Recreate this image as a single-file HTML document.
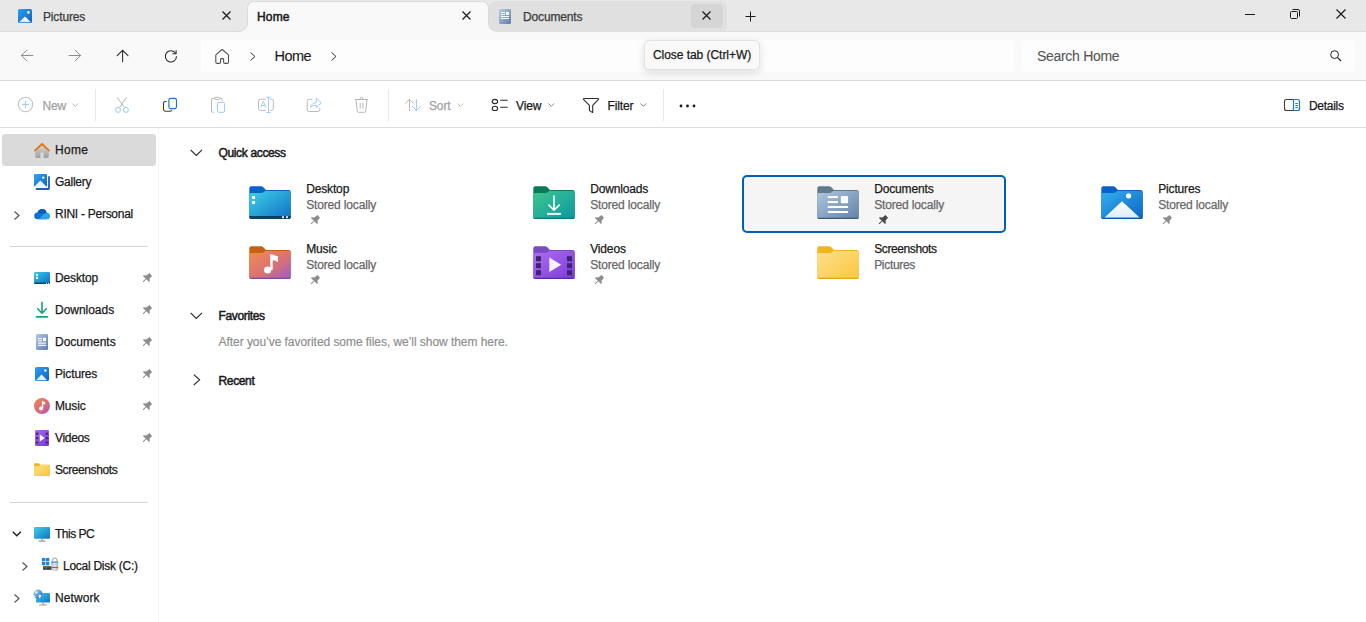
<!DOCTYPE html>
<html><head><meta charset="utf-8">
<style>
*{box-sizing:border-box;margin:0;padding:0}
html,body{width:1366px;height:622px;overflow:hidden;background:#fff}
body{position:relative;font-family:"Liberation Sans",sans-serif;font-size:12px;color:#1a1a1a}
.a{position:absolute}
.t{position:absolute;white-space:nowrap;-webkit-text-stroke:0.25px currentColor}
svg{position:absolute;overflow:visible}
</style></head><body>
<div class="a" style="left:0px;top:0px;width:1366px;height:31px;background:#e8e8e8;border-radius:0px;"></div>
<div class="a" style="left:0px;top:31px;width:1366px;height:1px;background:#dcdcdc;border-radius:0px;"></div>
<div class="a" style="left:0px;top:32px;width:1366px;height:48px;background:#f9f9f9;border-radius:0px;"></div>
<div class="a" style="left:0px;top:80px;width:1366px;height:1px;background:#dadada;border-radius:0px;"></div>
<div class="a" style="left:0px;top:81px;width:1366px;height:46px;background:#ffffff;border-radius:0px;"></div>
<div class="a" style="left:0px;top:127px;width:1366px;height:1px;background:#dcdcdc;border-radius:0px;"></div>
<div class="a" style="left:489px;top:1px;width:238px;height:30.5px;background:#e0e0e0;border-radius:7px;"></div>
<div class="a" style="left:691px;top:4px;width:32px;height:24px;background:#d5d5d5;border-radius:4px;"></div>
<svg style="left:236px;top:0px" width="264" height="33" viewBox="236 0 264 33"><path d="M236 31.5 Q247.5 31.5 247.5 23 V8.5 Q247.5 1.5 254.5 1.5 H481.5 Q488.5 1.5 488.5 8.5 V23 Q488.5 31.5 500 31.5 V33 H236 Z" fill="#f9f9f9"/><path d="M236 31.5 Q247.5 31.5 247.5 23 V8.5 Q247.5 1.5 254.5 1.5 H481.5 Q488.5 1.5 488.5 8.5 V23 Q488.5 31.5 500 31.5" fill="none" stroke="#dadada" stroke-width="1"/></svg>
<div class="a" style="left:201px;top:40px;width:813px;height:32px;background:#fdfdfd;border-radius:4px;"></div>
<div class="a" style="left:1022px;top:40px;width:333px;height:32px;background:#fdfdfd;border-radius:4px;"></div>
<div class="a" style="left:158px;top:128px;width:1px;height:494px;background:#f5f5f5;border-radius:0px;"></div>
<svg style="left:18px;top:9px" width="14" height="14" viewBox="0 0 14 14"><defs><linearGradient id="pg" x1="0" y1="0" x2="1" y2="1"><stop offset="0" stop-color="#2aa0f2"/><stop offset="1" stop-color="#0c62c0"/></linearGradient>
<linearGradient id="pm" x1="0" y1="0" x2="0" y2="1"><stop offset="0" stop-color="#ffffff"/><stop offset="1" stop-color="#d6e9fb"/></linearGradient></defs>
<rect x="0" y="0" width="14" height="14" rx="1.5" fill="url(#pg)"/>
<path d="M1 13.2 L7 7.6 L13 13.2 Z" fill="url(#pm)"/>
<circle cx="10.4" cy="3.4" r="1.3" fill="#fff"/></svg>
<div class="t" style="left:43px;top:9.00px;font-size:12px;line-height:16px;color:#3a3a3a;letter-spacing:-0.15px;">Pictures</div>
<svg style="left:222px;top:11px" width="9" height="9" viewBox="0 0 9 9"><path d="M0.5 0.5 L8.5 8.5 M8.5 0.5 L0.5 8.5" stroke="#1a1a1a" stroke-width="1.15" fill="none"/></svg>
<div class="t" style="left:257px;top:9.00px;font-size:12px;line-height:16px;color:#1a1a1a;letter-spacing:0.15px;-webkit-text-stroke:0.5px currentColor;">Home</div>
<svg style="left:462px;top:11px" width="9" height="9" viewBox="0 0 9 9"><path d="M0.5 0.5 L8.5 8.5 M8.5 0.5 L0.5 8.5" stroke="#1a1a1a" stroke-width="1.15" fill="none"/></svg>
<svg style="left:499px;top:9px" width="12" height="15" viewBox="0 0 12 15"><defs><linearGradient id="dg" x1="0" y1="0" x2="1" y2="1"><stop offset="0" stop-color="#b8cfe8"/><stop offset="1" stop-color="#5a7eaa"/></linearGradient></defs>
<rect x="0" y="0" width="12" height="15" rx="1.2" fill="url(#dg)"/>
<rect x="2" y="3" width="4" height="1" fill="#fff"/><rect x="2" y="5" width="4" height="1" fill="#fff"/>
<rect x="7" y="3" width="3" height="3" fill="#fff"/>
<rect x="2" y="7" width="8" height="1" fill="#fff"/><rect x="2" y="9" width="8" height="1" fill="#fff"/></svg>
<div class="t" style="left:523px;top:9.00px;font-size:12px;line-height:16px;color:#3a3a3a;letter-spacing:-0.15px;">Documents</div>
<svg style="left:702px;top:11px" width="9" height="9" viewBox="0 0 9 9"><path d="M0.5 0.5 L8.5 8.5 M8.5 0.5 L0.5 8.5" stroke="#1a1a1a" stroke-width="1.15" fill="none"/></svg>
<svg style="left:745px;top:11px" width="11" height="11" viewBox="0 0 11 11"><path d="M5.5 0.5 V10.5 M0.5 5.5 H10.5" stroke="#1a1a1a" stroke-width="1" fill="none"/></svg>
<svg style="left:1245px;top:14px" width="10" height="1" viewBox="0 0 10 1"><rect x="0" y="0" width="10" height="1" fill="#1a1a1a"/></svg>
<svg style="left:1290px;top:9px" width="10" height="10" viewBox="0 0 10 10"><path d="M0.5 3.5 Q0.5 2.5 1.5 2.5 H6.5 Q7.5 2.5 7.5 3.5 V8.5 Q7.5 9.5 6.5 9.5 H1.5 Q0.5 9.5 0.5 8.5 Z M2.5 0.5 H8 Q9.5 0.5 9.5 2 V7.5" stroke="#1a1a1a" stroke-width="1" fill="none"/></svg>
<svg style="left:1336px;top:9px" width="10" height="10" viewBox="0 0 10 10"><path d="M0.5 0.5 L9.5 9.5 M9.5 0.5 L0.5 9.5" stroke="#1a1a1a" stroke-width="1.15" fill="none"/></svg>
<svg style="left:20px;top:49px" width="14" height="13" viewBox="0 0 14 13"><path d="M6.8 1.2 L1.3 6.5 L6.8 11.8 M1.3 6.5 H12.9" stroke="#8c8c8c" stroke-width="1" fill="none" stroke-linecap="round"/></svg>
<svg style="left:68px;top:49px" width="14" height="13" viewBox="0 0 14 13"><path d="M7.2 1.2 L12.7 6.5 L7.2 11.8 M12.7 6.5 H1.1" stroke="#8c8c8c" stroke-width="1" fill="none" stroke-linecap="round"/></svg>
<svg style="left:116px;top:49px" width="13" height="14" viewBox="0 0 13 14"><path d="M1.2 6.6 L6.6 1.3 L12 6.6 M6.6 1.3 V12.7" stroke="#2a2a2a" stroke-width="1.05" fill="none" stroke-linecap="round"/></svg>
<svg style="left:164px;top:49px" width="14" height="14" viewBox="0 0 14 14"><path d="M11.6 4.3 A5.6 5.6 0 1 0 12.5 7.3" stroke="#2a2a2a" stroke-width="1.05" fill="none"/><path d="M12.1 1.3 V4.8 H8.4" stroke="#2a2a2a" stroke-width="1.05" fill="none"/></svg>
<svg style="left:214px;top:48px" width="16" height="17" viewBox="0 0 16 17"><path d="M1.8 7.6 Q1.8 6.9 2.4 6.4 L7.3 2 Q8.1 1.3 8.9 2 L13.9 6.4 Q14.5 6.9 14.5 7.6 V13.9 Q14.5 15.4 13 15.4 H11 Q9.6 15.4 9.6 14 V11.4 Q9.6 10.6 8.8 10.6 H7.4 Q6.6 10.6 6.6 11.4 V14 Q6.6 15.4 5.2 15.4 H3.3 Q1.8 15.4 1.8 13.9 Z" stroke="#505050" stroke-width="1.1" fill="none" stroke-linejoin="round"/></svg>
<svg style="left:249.5px;top:51.8px" width="6" height="9" viewBox="0 0 6 9"><path d="M0.5 0.5 L5 4.5 L0.5 8.5" stroke="#333" stroke-width="1" fill="none"/></svg>
<div class="t" style="left:274.5px;top:47.00px;font-size:14.5px;line-height:19px;color:#1a1a1a;letter-spacing:-0.55px;-webkit-text-stroke:0.1px currentColor">Home</div>
<svg style="left:330.8px;top:51.8px" width="6" height="9" viewBox="0 0 6 9"><path d="M0.5 0.5 L5 4.5 L0.5 8.5" stroke="#333" stroke-width="1" fill="none"/></svg>
<div class="t" style="left:1037px;top:47.00px;font-size:14px;line-height:19px;color:#555555;letter-spacing:-0.3px;-webkit-text-stroke:0.1px currentColor">Search Home</div>
<svg style="left:1330px;top:50px" width="12" height="12" viewBox="0 0 12 12"><circle cx="4.6" cy="4.6" r="3.9" stroke="#1f1f1f" stroke-width="1" fill="none"/><path d="M7.4 7.4 L11 11" stroke="#1f1f1f" stroke-width="1.15"/></svg>
<div class="a" style="left:644px;top:40px;width:116px;height:30px;background:#f9f9f9;border-radius:5px;border:1px solid #e2e2e2;box-shadow:0 3px 8px rgba(0,0,0,0.12)"></div>
<div class="t" style="left:653px;top:47.00px;font-size:12px;line-height:16px;color:#1a1a1a;letter-spacing:-0.05px;">Close tab (Ctrl+W)</div>
<svg style="left:17px;top:96px" width="17" height="17" viewBox="0 0 17 17"><circle cx="8.5" cy="8.5" r="7.2" stroke="#c4c4c4" stroke-width="1.1" fill="none"/><path d="M8.5 4.8 V12 M5 8.4 H12" stroke="#9cc9f0" stroke-width="1" fill="none"/></svg>
<div class="t" style="left:42.5px;top:98.00px;font-size:12px;line-height:16px;color:#a2a2a2;letter-spacing:-0.15px;">New</div>
<svg style="left:72px;top:103.2px" width="7" height="4" viewBox="0 0 7 4"><path d="M0.5 0.5 L3.3 3.3 L6.1 0.5" stroke="#b0b0b0" stroke-width="0.9" fill="none"/></svg>
<div class="a" style="left:95px;top:89px;width:1px;height:32px;background:#e8e8e8;border-radius:0px;"></div>
<svg style="left:113px;top:96px" width="17" height="18" viewBox="0 0 17 18"><path d="M4.2 1.3 L11.2 11.4 M13.6 1.3 L6.6 11.4" stroke="#b8b8b8" stroke-width="1" fill="none"/><circle cx="5" cy="13.9" r="2.5" stroke="#9cc9f0" stroke-width="1" fill="none"/><circle cx="12.9" cy="13.9" r="2.5" stroke="#9cc9f0" stroke-width="1" fill="none"/></svg>
<svg style="left:162px;top:97px" width="16" height="16" viewBox="0 0 16 16"><path d="M4.7 4.5 H3.3 Q1.5 4.5 1.5 6.3 V12.3 Q1.5 14.2 3.3 14.2 H8.2 Q9.7 14.2 9.9 13" stroke="#3c3c3c" stroke-width="1.1" fill="none"/><rect x="6.9" y="1.4" width="7.6" height="10.2" rx="1.8" stroke="#1a77d2" stroke-width="1.2" fill="none"/></svg>
<svg style="left:210px;top:96px" width="16" height="18" viewBox="0 0 16 18"><path d="M3.8 16.3 H2.8 Q1.5 16.3 1.5 15 V3.8 Q1.5 2.4 2.8 2.4 H11 Q12.4 2.4 12.4 3.8 V4.6" stroke="#b8b8b8" stroke-width="1" fill="none"/><rect x="4.6" y="1.3" width="4.8" height="2.2" rx="1.1" stroke="#b8b8b8" stroke-width="1" fill="#fff"/><rect x="7.4" y="6.3" width="7.2" height="10" rx="1.4" stroke="#9cc9f0" stroke-width="1" fill="none"/></svg>
<svg style="left:257px;top:96px" width="18" height="18" viewBox="0 0 18 18"><path d="M8.8 3.2 H3.5 Q1.5 3.2 1.5 5.2 V12.4 Q1.5 14.4 3.5 14.4 H8.8 M13.2 3.2 H14.4 Q16.4 3.2 16.4 5.2 V12.4 Q16.4 14.4 14.4 14.4 H13.2" stroke="#b8b8b8" stroke-width="1" fill="none"/><path d="M11.6 1.3 V16.6 M9.3 1.3 H13.9 M9.3 16.6 H13.9" stroke="#9cc9f0" stroke-width="1" fill="none"/><path d="M3.6 11.6 L6.3 5.2 L9 11.6 M4.6 9.6 H8" stroke="#9cc9f0" stroke-width="0.9" fill="none"/></svg>
<svg style="left:306px;top:96px" width="17" height="17" viewBox="0 0 17 17"><path d="M6.5 3.3 H3.2 Q1.2 3.3 1.2 5.3 V13.5 Q1.2 15.5 3.2 15.5 H11.8 Q13.8 15.5 13.8 13.5 V12" stroke="#b8b8b8" stroke-width="1" fill="none"/><path d="M4.3 11.3 Q5.5 6.8 10.3 6.8 V2.1 L15.4 6.9 L10.3 11.6 V9.2 Q6.5 9.2 4.3 11.3 Z" stroke="#9cc9f0" stroke-width="0.9" fill="none" stroke-linejoin="round"/></svg>
<svg style="left:354px;top:96px" width="16" height="18" viewBox="0 0 16 18"><path d="M0.8 3.5 H14.2 M2 3.5 L3.3 15.3 Q3.4 16.3 4.4 16.3 H10.6 Q11.6 16.3 11.7 15.3 L13 3.5 M6.2 3.5 V2.8 Q6.2 1.3 7.5 1.3 Q8.8 1.3 8.8 2.8 V3.5 M6.2 6.9 V12.7 M8.9 6.9 V12.7" stroke="#b8b8b8" stroke-width="1" fill="none"/></svg>
<div class="a" style="left:388px;top:89px;width:1px;height:32px;background:#e8e8e8;border-radius:0px;"></div>
<svg style="left:404px;top:98px" width="18" height="14" viewBox="0 0 18 14"><path d="M5.5 13 V1.2 M1.3 5.6 L5.5 1.2 L9.7 5.6" stroke="#b8b8b8" stroke-width="1" fill="none"/><path d="M12.4 1.2 V12.8 M8.2 8.2 L12.4 12.6 L16.6 8.2" stroke="#9cc9f0" stroke-width="1" fill="none"/></svg>
<div class="t" style="left:429px;top:98.00px;font-size:12px;line-height:16px;color:#a2a2a2;letter-spacing:-0.15px;">Sort</div>
<svg style="left:457px;top:103.4px" width="7" height="4" viewBox="0 0 7 4"><path d="M0.5 0.5 L3.3 3.3 L6.1 0.5" stroke="#b0b0b0" stroke-width="0.9" fill="none"/></svg>
<svg style="left:491px;top:98px" width="18" height="13" viewBox="0 0 18 13"><ellipse cx="3.9" cy="3.5" rx="2.7" ry="2.1" stroke="#2b2b2b" stroke-width="1.1" fill="none"/><ellipse cx="3.9" cy="10.4" rx="2.7" ry="2.1" stroke="#2b2b2b" stroke-width="1.1" fill="none"/><path d="M9.2 2.3 H16.7 M9.2 9.3 H16.7" stroke="#2b2b2b" stroke-width="1.1"/></svg>
<div class="t" style="left:516px;top:98.00px;font-size:12px;line-height:16px;color:#1a1a1a;letter-spacing:-0.15px;">View</div>
<svg style="left:548px;top:103.4px" width="7" height="4" viewBox="0 0 7 4"><path d="M0.5 0.5 L3.3 3.3 L6.1 0.5" stroke="#777" stroke-width="0.9" fill="none"/></svg>
<svg style="left:582px;top:97px" width="18" height="17" viewBox="0 0 18 17"><path d="M2.3 1.5 H15.7 Q17.2 1.5 16.3 2.7 L10.7 8.4 V15.6 L7.4 13.6 V8.4 L1.7 2.7 Q0.8 1.5 2.3 1.5 Z" stroke="#2b2b2b" stroke-width="1.1" fill="none" stroke-linejoin="round"/></svg>
<div class="t" style="left:607.5px;top:98.00px;font-size:12px;line-height:16px;color:#1a1a1a;letter-spacing:-0.15px;">Filter</div>
<svg style="left:640px;top:103.4px" width="7" height="4" viewBox="0 0 7 4"><path d="M0.5 0.5 L3.3 3.3 L6.1 0.5" stroke="#777" stroke-width="0.9" fill="none"/></svg>
<div class="a" style="left:663px;top:89px;width:1px;height:32px;background:#e8e8e8;border-radius:0px;"></div>
<svg style="left:679px;top:104px" width="18" height="4" viewBox="0 0 18 4"><circle cx="2" cy="2" r="1.4" fill="#1a1a1a"/><circle cx="8.5" cy="2" r="1.4" fill="#1a1a1a"/><circle cx="15" cy="2" r="1.4" fill="#1a1a1a"/></svg>
<svg style="left:1283px;top:98px" width="18" height="14" viewBox="0 0 18 14"><path d="M10.5 1.5 H3.5 Q1.5 1.5 1.5 3.5 V10.5 Q1.5 12.5 3.5 12.5 H10.5" stroke="#3c3c3c" stroke-width="1.1" fill="none"/><path d="M10.5 1.5 H14.5 Q16.5 1.5 16.5 3.5 V10.5 Q16.5 12.5 14.5 12.5 H10.5 Z" stroke="#1a77d2" stroke-width="1.2" fill="none"/><path d="M12.3 5.5 H14.8 M12.3 7.5 H14.8 M12.3 9.5 H14.8" stroke="#1a77d2" stroke-width="1"/></svg>
<div class="t" style="left:1309px;top:98.00px;font-size:12px;line-height:16px;color:#1a1a1a;letter-spacing:-0.3px;">Details</div>
<div class="a" style="left:2px;top:134px;width:154px;height:32px;background:#dadada;border-radius:3px;"></div>
<svg style="left:34px;top:142px" width="16" height="16" viewBox="0 0 16 16"><defs><linearGradient id="hh" x1="0" y1="0" x2="0" y2="1"><stop offset="0" stop-color="#d9d9d9"/><stop offset="1" stop-color="#9e9e9e"/></linearGradient></defs>
<path d="M1.3 8 L8 2.4 L14.7 8 V14.6 Q14.7 15.9 13.4 15.9 H9.6 V11.2 Q9.6 10.4 8.8 10.4 H7.2 Q6.4 10.4 6.4 11.2 V15.9 H2.6 Q1.3 15.9 1.3 14.6 Z" fill="url(#hh)"/>
<path d="M0.9 8.6 L8 2 L15.1 8.6" stroke="#e8730f" stroke-width="1.8" fill="none" stroke-linecap="round" stroke-linejoin="round"/></svg>
<div class="t" style="left:55px;top:142.00px;font-size:12px;line-height:16px;color:#1a1a1a;letter-spacing:0.3px;">Home</div>
<svg style="left:34px;top:174px" width="16" height="16" viewBox="0 0 16 16"><defs><linearGradient id="gl" x1="0" y1="0" x2="1" y2="1"><stop offset="0" stop-color="#3aa3f0"/><stop offset="1" stop-color="#0b63c1"/></linearGradient></defs>
<path d="M1.8 15.9 H14.6 Q15.9 15.9 15.9 14.6 V2.2 H14.1 V14.1 H1.8 Z" fill="#1a62c0"/>
<rect x="0" y="0" width="13" height="13" rx="1" fill="url(#gl)"/>
<path d="M0 13 L6.3 6.6 L13 13 Z" fill="#eaf4fd"/><circle cx="9.3" cy="3.6" r="1.2" fill="#fff"/></svg>
<div class="t" style="left:55px;top:174.00px;font-size:12px;line-height:16px;color:#1a1a1a;letter-spacing:-0.26px;">Gallery</div>
<svg style="left:14.2px;top:210.5px" width="6" height="9" viewBox="0 0 6 9"><path d="M0.5 0.5 L5 4.5 L0.5 8.5" stroke="#555" stroke-width="1.2" fill="none"/></svg>
<svg style="left:34px;top:208px" width="16" height="12" viewBox="0 0 16 12"><path d="M4 11.2 Q0.2 11.2 0.2 8 Q0.2 4.9 3.4 4.6 Q4.6 1 8.3 1 Q11.8 1 12.6 4.4 Q15.8 4.9 15.8 8 Q15.8 11.2 12.4 11.2 Z" fill="#0f6fcf"/>
<path d="M3.5 4.7 Q4.6 1 8.3 1 Q11.8 1 12.5 4.5 Q10.8 4.6 9.6 5.8 Q6.8 4.2 3.5 4.7 Z" fill="#0a5cb4"/>
<path d="M4.6 11.2 L10.4 5.6 Q11.2 4.9 12.6 4.9 Q15.8 5.4 15.8 8.2 Q15.8 11.2 12.4 11.2 Z" fill="#2aa4ea"/></svg>
<div class="t" style="left:55px;top:206.00px;font-size:12px;line-height:16px;color:#1a1a1a;letter-spacing:-0.27px;">RINI - Personal</div>
<div class="a" style="left:10px;top:246px;width:138px;height:1px;background:#d6d6d6;border-radius:0px;"></div>
<svg style="left:141px;top:271.5px" width="12" height="12" viewBox="0 0 12 12"><g transform="translate(6 6) rotate(45)"><path d="M-1.9 -5.2 H1.9 L2.2 -1.3 L4.3 0.3 V1.4 H-4.3 V0.3 L-2.2 -1.3 Z" fill="#8c8c8c"/><path d="M0 1.4 V5.6" stroke="#8c8c8c" stroke-width="1"/></g></svg>
<svg style="left:141px;top:303.5px" width="12" height="12" viewBox="0 0 12 12"><g transform="translate(6 6) rotate(45)"><path d="M-1.9 -5.2 H1.9 L2.2 -1.3 L4.3 0.3 V1.4 H-4.3 V0.3 L-2.2 -1.3 Z" fill="#8c8c8c"/><path d="M0 1.4 V5.6" stroke="#8c8c8c" stroke-width="1"/></g></svg>
<svg style="left:141px;top:335.5px" width="12" height="12" viewBox="0 0 12 12"><g transform="translate(6 6) rotate(45)"><path d="M-1.9 -5.2 H1.9 L2.2 -1.3 L4.3 0.3 V1.4 H-4.3 V0.3 L-2.2 -1.3 Z" fill="#8c8c8c"/><path d="M0 1.4 V5.6" stroke="#8c8c8c" stroke-width="1"/></g></svg>
<svg style="left:141px;top:367.5px" width="12" height="12" viewBox="0 0 12 12"><g transform="translate(6 6) rotate(45)"><path d="M-1.9 -5.2 H1.9 L2.2 -1.3 L4.3 0.3 V1.4 H-4.3 V0.3 L-2.2 -1.3 Z" fill="#8c8c8c"/><path d="M0 1.4 V5.6" stroke="#8c8c8c" stroke-width="1"/></g></svg>
<svg style="left:141px;top:399.5px" width="12" height="12" viewBox="0 0 12 12"><g transform="translate(6 6) rotate(45)"><path d="M-1.9 -5.2 H1.9 L2.2 -1.3 L4.3 0.3 V1.4 H-4.3 V0.3 L-2.2 -1.3 Z" fill="#8c8c8c"/><path d="M0 1.4 V5.6" stroke="#8c8c8c" stroke-width="1"/></g></svg>
<svg style="left:141px;top:431.5px" width="12" height="12" viewBox="0 0 12 12"><g transform="translate(6 6) rotate(45)"><path d="M-1.9 -5.2 H1.9 L2.2 -1.3 L4.3 0.3 V1.4 H-4.3 V0.3 L-2.2 -1.3 Z" fill="#8c8c8c"/><path d="M0 1.4 V5.6" stroke="#8c8c8c" stroke-width="1"/></g></svg>
<svg style="left:34px;top:272px" width="16" height="12" viewBox="0 0 16 12"><defs><linearGradient id="dsn" x1="0" y1="0" x2="1" y2="1"><stop offset="0" stop-color="#38cce6"/><stop offset="1" stop-color="#0f6cc4"/></linearGradient></defs>
<rect x="0" y="0" width="16" height="12" rx="1.4" fill="url(#dsn)"/><path d="M0 10.6 H16 V10.8 Q16 12 14.8 12 H1.2 Q0 12 0 10.8 Z" fill="#0b4a6e"/>
<rect x="2" y="2" width="2" height="2" fill="#fff"/><rect x="2" y="5" width="2" height="2" fill="#fff"/><rect x="12" y="10.8" width="1" height="1" fill="#fff"/><rect x="14" y="10.8" width="1" height="1" fill="#fff"/></svg>
<div class="t" style="left:55px;top:270.00px;font-size:12px;line-height:16px;color:#1a1a1a;letter-spacing:-0.15px;">Desktop</div>
<svg style="left:34px;top:301px" width="16" height="18" viewBox="0 0 16 18"><path d="M8 1.2 V12 M3.6 7.8 L8 12.2 L12.4 7.8" stroke="#15a27e" stroke-width="1.6" fill="none" stroke-linecap="round" stroke-linejoin="round"/><path d="M2.5 15.8 H13.5" stroke="#15a27e" stroke-width="1.8" stroke-linecap="round"/></svg>
<div class="t" style="left:55px;top:302.00px;font-size:12px;line-height:16px;color:#1a1a1a;letter-spacing:-0.03px;">Downloads</div>
<svg style="left:36px;top:334px" width="12" height="16" viewBox="0 0 12 16"><defs><linearGradient id="dg2" x1="0" y1="0" x2="1" y2="1"><stop offset="0" stop-color="#b3c9e2"/><stop offset="1" stop-color="#5b7fab"/></linearGradient></defs>
<rect x="0" y="0" width="12" height="16" rx="1.2" fill="url(#dg2)"/>
<rect x="2" y="4" width="4" height="1.1" fill="#fff"/><rect x="2" y="6.2" width="4" height="1.1" fill="#fff"/>
<rect x="7" y="3.8" width="3" height="3.4" rx=".4" fill="#fff"/>
<rect x="2" y="8.6" width="8" height="1.1" fill="#fff"/><rect x="2" y="10.8" width="8" height="1.1" fill="#fff"/></svg>
<div class="t" style="left:55px;top:334.00px;font-size:12px;line-height:16px;color:#1a1a1a;letter-spacing:0.0px;">Documents</div>
<svg style="left:35px;top:367px" width="14" height="14" viewBox="0 0 14 14"><rect x="0" y="0" width="14" height="14" rx="1.5" fill="url(#pg)"/>
<path d="M1 13.2 L6.6 7.6 L12.2 13.2 Z" fill="url(#pm)"/><circle cx="10.4" cy="3.5" r="1.3" fill="#fff"/></svg>
<div class="t" style="left:55px;top:366.00px;font-size:12px;line-height:16px;color:#1a1a1a;letter-spacing:-0.15px;">Pictures</div>
<svg style="left:34px;top:398px" width="16" height="16" viewBox="0 0 16 16"><defs><linearGradient id="mu" x1="0" y1="0" x2="1" y2="1"><stop offset="0" stop-color="#f08a4b"/><stop offset="0.6" stop-color="#d66a7c"/><stop offset="1" stop-color="#9b59c8"/></linearGradient></defs>
<circle cx="8" cy="8" r="8" fill="url(#mu)"/>
<path d="M8.6 3.2 V10.4" stroke="#fff" stroke-width="1.4"/><path d="M8.6 3.2 L11.2 4.4 V6.4 L8.6 5.4 Z" fill="#fff"/><circle cx="7" cy="10.6" r="2" fill="#fff"/></svg>
<div class="t" style="left:55px;top:398.00px;font-size:12px;line-height:16px;color:#1a1a1a;letter-spacing:-0.15px;">Music</div>
<svg style="left:35px;top:430px" width="14" height="16" viewBox="0 0 14 16"><defs><linearGradient id="vi" x1="0" y1="0" x2="1" y2="1"><stop offset="0" stop-color="#a86bec"/><stop offset="1" stop-color="#7238d2"/></linearGradient></defs>
<rect x="0" y="0" width="14" height="16" rx="1.3" fill="url(#vi)"/>
<rect x="1.2" y="2.6" width="2" height="2.2" rx=".6" fill="#3b1f73"/><rect x="1.2" y="7" width="2" height="2.2" rx=".6" fill="#3b1f73"/><rect x="1.2" y="11.4" width="2" height="2.2" rx=".6" fill="#3b1f73"/>
<rect x="10.8" y="2.6" width="2" height="2.2" rx=".6" fill="#3b1f73"/><rect x="10.8" y="7" width="2" height="2.2" rx=".6" fill="#3b1f73"/><rect x="10.8" y="11.4" width="2" height="2.2" rx=".6" fill="#3b1f73"/>
<path d="M4.8 4.6 L9.8 8 L4.8 11.4 Z" fill="#fff"/></svg>
<div class="t" style="left:55px;top:430.00px;font-size:12px;line-height:16px;color:#1a1a1a;letter-spacing:-0.33px;">Videos</div>
<svg style="left:34px;top:463px" width="16" height="13" viewBox="0 0 42 33"><defs><linearGradient id="ss_s" x1="0" y1="0" x2="1" y2="1"><stop offset="0" stop-color="#ffe08a"/><stop offset="1" stop-color="#f8c53a"/></linearGradient></defs>
<path d="M0.3 2.3 Q0.3 0.3 2.3 0.3 H12.2 Q13.4 0.3 14.3 1.2 L17 4 H39.7 Q41.7 4 41.7 6 V31 Q41.7 33 39.7 33 H2.3 Q0.3 33 0.3 31 Z" fill="#f0b51e"/>
<path d="M0.3 9 Q0.3 7 2.3 7 H12.6 Q13.6 7 14.5 6.2 L15.3 5.5 Q16 4.9 17 4.9 H39.7 Q41.7 4.8 41.7 6.8 V31 Q41.7 33 39.7 33 H2.3 Q0.3 33 0.3 31 Z" fill="url(#ss_s)"/></svg>
<div class="t" style="left:55px;top:462.00px;font-size:12px;line-height:16px;color:#1a1a1a;letter-spacing:-0.4px;">Screenshots</div>
<div class="a" style="left:10px;top:502px;width:138px;height:1px;background:#d6d6d6;border-radius:0px;"></div>
<svg style="left:12px;top:531px" width="10" height="6" viewBox="0 0 10 6"><path d="M0.8 0.8 L4.8 4.8 L8.8 0.8" stroke="#222" stroke-width="1.5" fill="none"/></svg>
<svg style="left:34px;top:527px" width="16" height="15" viewBox="0 0 16 15"><defs><linearGradient id="pc" x1="0" y1="0" x2="1" y2="1"><stop offset="0" stop-color="#3fd0e6"/><stop offset="1" stop-color="#0f74c4"/></linearGradient></defs>
<rect x="0" y="0" width="16" height="11.8" rx="1" fill="url(#pc)"/><rect x="7.4" y="11.8" width="1.2" height="2" fill="#8a8a8a"/><rect x="4.5" y="13.6" width="7" height="1.2" rx=".5" fill="#9a9a9a"/></svg>
<div class="t" style="left:55px;top:526.00px;font-size:12px;line-height:16px;color:#1a1a1a;letter-spacing:-0.5px;">This PC</div>
<svg style="left:22px;top:562px" width="6" height="9" viewBox="0 0 6 9"><path d="M0.5 0.5 L5 4.5 L0.5 8.5" stroke="#555" stroke-width="1.2" fill="none"/></svg>
<svg style="left:41px;top:557px" width="18" height="15" viewBox="0 0 18 15"><rect x="0.9" y="0.9" width="3.4" height="3.4" fill="#1a86e0"/><rect x="4.9" y="0.9" width="3.4" height="3.4" fill="#1a86e0"/><rect x="0.9" y="4.9" width="3.4" height="3.4" fill="#1a86e0"/><rect x="4.9" y="4.9" width="3.4" height="3.4" fill="#1a86e0"/>
<defs><linearGradient id="drv" x1="0" y1="0" x2="0" y2="1"><stop offset="0" stop-color="#6a6a6a"/><stop offset="1" stop-color="#262626"/></linearGradient><linearGradient id="lk" x1="0" y1="0" x2="1" y2="0"><stop offset="0" stop-color="#b9b9b9"/><stop offset="0.5" stop-color="#e6e6e6"/><stop offset="1" stop-color="#a9a9a9"/></linearGradient></defs>
<rect x="2" y="9" width="9" height="3.8" rx=".5" fill="url(#drv)"/><circle cx="5" cy="10.9" r=".6" fill="#3ee05a"/>
<path d="M11.6 4.6 V3.2 Q11.6 1 13.8 1 Q16 1 16 3.2 V4.6" stroke="#9a9a9a" stroke-width="1" fill="none"/>
<path d="M10.2 4.6 H17.2 V11.5 Q17.2 14.2 13.7 14.2 Q10.2 14.2 10.2 11.5 Z" fill="url(#lk)"/><rect x="10.2" y="4.6" width="7" height="1" fill="#1a86e0"/><rect x="10.2" y="10" width="7" height="1" fill="#1a86e0"/></svg>
<div class="t" style="left:63px;top:558.00px;font-size:12px;line-height:16px;color:#1a1a1a;letter-spacing:-0.26px;">Local Disk (C:)</div>
<svg style="left:14px;top:594px" width="6" height="9" viewBox="0 0 6 9"><path d="M0.5 0.5 L5 4.5 L0.5 8.5" stroke="#555" stroke-width="1.2" fill="none"/></svg>
<svg style="left:33px;top:589px" width="18" height="18" viewBox="0 0 18 18"><defs><linearGradient id="gb" x1="0" y1="0" x2="1" y2="1"><stop offset="0" stop-color="#8fd0f5"/><stop offset="1" stop-color="#1f6fc0"/></linearGradient></defs>
<rect x="3" y="4" width="14" height="9.6" rx=".8" fill="url(#pc)"/><rect x="9.4" y="13.6" width="1.2" height="2" fill="#8a8a8a"/><rect x="6" y="15.4" width="8" height="1.2" rx=".5" fill="#9a9a9a"/>
<circle cx="5.2" cy="5.2" r="4.6" fill="url(#gb)"/><path d="M2.2 2.6 Q3.6 2 4.8 2.6 L4.4 4.2 Q3.2 5 2.4 4.4 Z M5.8 5.8 Q7.4 5.4 8.6 6.4 Q8 8.6 6.2 9.2 Q5.4 7.6 5.8 5.8 Z M1 6.2 Q2 6.4 2.6 7.8 Q2 8.6 1.4 7.8 Z" fill="#e6f4fc"/></svg>
<div class="t" style="left:55px;top:590.00px;font-size:12px;line-height:16px;color:#1a1a1a;letter-spacing:0.1px;">Network</div>
<svg style="left:189.5px;top:148.5px" width="13" height="8" viewBox="0 0 13 8"><path d="M0.6 0.8 L6.3 6.5 L12 0.8" stroke="#262626" stroke-width="1.1" fill="none"/></svg>
<div class="t" style="left:218.5px;top:145.00px;font-size:12px;line-height:16px;color:#1a1a1a;letter-spacing:-0.35px;-webkit-text-stroke:0.5px currentColor;">Quick access</div>
<div class="a" style="left:742px;top:175px;width:264px;height:58px;background:#f5f5f5;border-radius:5px;border:2px solid #005fb8"></div>
<svg style="left:249px;top:186px" width="42" height="33" viewBox="0 0 42 33"><defs><linearGradient id="fd" x1="0" y1="0" x2="1" y2="1"><stop offset="0" stop-color="#3fd3e4"/><stop offset="1" stop-color="#0f6ec8"/></linearGradient></defs>
<path d="M0.3 2.3 Q0.3 0.3 2.3 0.3 H12.2 Q13.4 0.3 14.3 1.2 L17 4 H39.7 Q41.7 4 41.7 6 V31 Q41.7 33 39.7 33 H2.3 Q0.3 33 0.3 31 Z" fill="#0a62c9"/>
<path d="M0.3 9 Q0.3 7 2.3 7 H12.6 Q13.6 7 14.5 6.2 L15.3 5.5 Q16 4.9 17 4.9 H39.7 Q41.7 4.8 41.7 6.8 V31 Q41.7 33 39.7 33 H2.3 Q0.3 33 0.3 31 Z" fill="url(#fd)"/><path d="M0.3 30 H41.7 V31 Q41.7 33 39.7 33 H2.3 Q0.3 33 0.3 31 Z" fill="#0a4264"/><rect x="3" y="10" width="3" height="3" fill="#fff"/><rect x="3" y="15" width="3" height="3" fill="#fff"/><rect x="33" y="30.2" width="2" height="2" fill="#fff" opacity=".85"/><rect x="37" y="30.2" width="2" height="2" fill="#fff" opacity=".85"/></svg>
<div class="t" style="left:306.2px;top:181.00px;font-size:12px;line-height:16px;color:#1a1a1a;letter-spacing:-0.15px;">Desktop</div>
<div class="t" style="left:306.2px;top:197.00px;font-size:12px;line-height:16px;color:#676767;letter-spacing:-0.15px;">Stored locally</div>
<svg style="left:309px;top:213.5px" width="12" height="12" viewBox="0 0 12 12"><g transform="translate(6 6) rotate(45)"><path d="M-1.9 -5.2 H1.9 L2.2 -1.3 L4.3 0.3 V1.4 H-4.3 V0.3 L-2.2 -1.3 Z" fill="#8c8c8c"/><path d="M0 1.4 V5.6" stroke="#8c8c8c" stroke-width="1"/></g></svg>
<svg style="left:533px;top:186px" width="42" height="33" viewBox="0 0 42 33"><defs><linearGradient id="fdl" x1="0" y1="0" x2="1" y2="1"><stop offset="0" stop-color="#3ec78d"/><stop offset="1" stop-color="#0b97a3"/></linearGradient></defs>
<path d="M0.3 2.3 Q0.3 0.3 2.3 0.3 H12.2 Q13.4 0.3 14.3 1.2 L17 4 H39.7 Q41.7 4 41.7 6 V31 Q41.7 33 39.7 33 H2.3 Q0.3 33 0.3 31 Z" fill="#0a7a57"/>
<path d="M0.3 9 Q0.3 7 2.3 7 H12.6 Q13.6 7 14.5 6.2 L15.3 5.5 Q16 4.9 17 4.9 H39.7 Q41.7 4.8 41.7 6.8 V31 Q41.7 33 39.7 33 H2.3 Q0.3 33 0.3 31 Z" fill="url(#fdl)"/><path d="M0.3 31.7 H41.7 V31 Q41.7 33 39.7 33 H2.3 Q0.3 33 0.3 31 Z" fill="#0a7a7a"/><path d="M21 9.4 V24 M15.4 18.6 L21 24.2 L26.6 18.6" stroke="#fff" stroke-width="1.6" fill="none"/><rect x="14.1" y="26.9" width="13.8" height="1.9" fill="#fff"/></svg>
<div class="t" style="left:590.2px;top:181.00px;font-size:12px;line-height:16px;color:#1a1a1a;letter-spacing:-0.15px;">Downloads</div>
<div class="t" style="left:590.2px;top:197.00px;font-size:12px;line-height:16px;color:#676767;letter-spacing:-0.15px;">Stored locally</div>
<svg style="left:593px;top:213.5px" width="12" height="12" viewBox="0 0 12 12"><g transform="translate(6 6) rotate(45)"><path d="M-1.9 -5.2 H1.9 L2.2 -1.3 L4.3 0.3 V1.4 H-4.3 V0.3 L-2.2 -1.3 Z" fill="#8c8c8c"/><path d="M0 1.4 V5.6" stroke="#8c8c8c" stroke-width="1"/></g></svg>
<svg style="left:817px;top:186px" width="42" height="33" viewBox="0 0 42 33"><defs><linearGradient id="fdo" x1="0" y1="0" x2="1" y2="1"><stop offset="0" stop-color="#b0c7df"/><stop offset="1" stop-color="#5f82a8"/></linearGradient></defs>
<path d="M0.3 2.3 Q0.3 0.3 2.3 0.3 H12.2 Q13.4 0.3 14.3 1.2 L17 4 H39.7 Q41.7 4 41.7 6 V31 Q41.7 33 39.7 33 H2.3 Q0.3 33 0.3 31 Z" fill="#5f7a8c"/>
<path d="M0.3 9 Q0.3 7 2.3 7 H12.6 Q13.6 7 14.5 6.2 L15.3 5.5 Q16 4.9 17 4.9 H39.7 Q41.7 4.8 41.7 6.8 V31 Q41.7 33 39.7 33 H2.3 Q0.3 33 0.3 31 Z" fill="url(#fdo)"/><path d="M0.3 31.7 H41.7 V31 Q41.7 33 39.7 33 H2.3 Q0.3 33 0.3 31 Z" fill="#3f5a73"/><rect x="10.8" y="10.1" width="10.2" height="2" fill="#fff"/><rect x="10.8" y="15" width="10.2" height="2" fill="#fff"/><rect x="23.8" y="9.9" width="7.3" height="7.3" rx="1" fill="#fff"/><rect x="10.8" y="20" width="20.3" height="2" fill="#fff"/><rect x="10.8" y="25" width="20.3" height="2" fill="#fff"/></svg>
<div class="t" style="left:874.2px;top:181.00px;font-size:12px;line-height:16px;color:#1a1a1a;letter-spacing:-0.15px;">Documents</div>
<div class="t" style="left:874.2px;top:197.00px;font-size:12px;line-height:16px;color:#676767;letter-spacing:-0.15px;">Stored locally</div>
<svg style="left:877px;top:213.5px" width="12" height="12" viewBox="0 0 12 12"><g transform="translate(6 6) rotate(45)"><path d="M-1.9 -5.2 H1.9 L2.2 -1.3 L4.3 0.3 V1.4 H-4.3 V0.3 L-2.2 -1.3 Z" fill="#4a4a4a"/><path d="M0 1.4 V5.6" stroke="#4a4a4a" stroke-width="1"/></g></svg>
<svg style="left:1101px;top:186px" width="42" height="33" viewBox="0 0 42 33"><defs><linearGradient id="fpi" x1="0" y1="0" x2="1" y2="1"><stop offset="0" stop-color="#36aef0"/><stop offset="1" stop-color="#0b65c3"/></linearGradient></defs>
<path d="M0.3 2.3 Q0.3 0.3 2.3 0.3 H12.2 Q13.4 0.3 14.3 1.2 L17 4 H39.7 Q41.7 4 41.7 6 V31 Q41.7 33 39.7 33 H2.3 Q0.3 33 0.3 31 Z" fill="#0a62c9"/>
<path d="M0.3 9 Q0.3 7 2.3 7 H12.6 Q13.6 7 14.5 6.2 L15.3 5.5 Q16 4.9 17 4.9 H39.7 Q41.7 4.8 41.7 6.8 V31 Q41.7 33 39.7 33 H2.3 Q0.3 33 0.3 31 Z" fill="url(#fpi)"/><path d="M0.3 31.7 H41.7 V31 Q41.7 33 39.7 33 H2.3 Q0.3 33 0.3 31 Z" fill="#0b58b0"/><defs><linearGradient id="mt" x1="0" y1="0" x2="0" y2="1"><stop offset="0" stop-color="#fff"/><stop offset="1" stop-color="#dcecfb"/></linearGradient></defs><path d="M3.5 31.5 L21 15.2 L38.5 31.5 Z" fill="url(#mt)"/><circle cx="27.6" cy="9.8" r="2.6" fill="#fff"/></svg>
<div class="t" style="left:1158.2px;top:181.00px;font-size:12px;line-height:16px;color:#1a1a1a;letter-spacing:-0.15px;">Pictures</div>
<div class="t" style="left:1158.2px;top:197.00px;font-size:12px;line-height:16px;color:#676767;letter-spacing:-0.15px;">Stored locally</div>
<svg style="left:1161px;top:213.5px" width="12" height="12" viewBox="0 0 12 12"><g transform="translate(6 6) rotate(45)"><path d="M-1.9 -5.2 H1.9 L2.2 -1.3 L4.3 0.3 V1.4 H-4.3 V0.3 L-2.2 -1.3 Z" fill="#8c8c8c"/><path d="M0 1.4 V5.6" stroke="#8c8c8c" stroke-width="1"/></g></svg>
<svg style="left:249px;top:246px" width="42" height="33" viewBox="0 0 42 33"><defs><linearGradient id="fmu" x1="0" y1="0" x2="1" y2="1"><stop offset="0" stop-color="#f58c4a"/><stop offset="0.6" stop-color="#d5707a"/><stop offset="1" stop-color="#9a5bcc"/></linearGradient></defs>
<path d="M0.3 2.3 Q0.3 0.3 2.3 0.3 H12.2 Q13.4 0.3 14.3 1.2 L17 4 H39.7 Q41.7 4 41.7 6 V31 Q41.7 33 39.7 33 H2.3 Q0.3 33 0.3 31 Z" fill="#c4620f"/>
<path d="M0.3 9 Q0.3 7 2.3 7 H12.6 Q13.6 7 14.5 6.2 L15.3 5.5 Q16 4.9 17 4.9 H39.7 Q41.7 4.8 41.7 6.8 V31 Q41.7 33 39.7 33 H2.3 Q0.3 33 0.3 31 Z" fill="url(#fmu)"/><path d="M0.3 31.8 H41.7 V31 Q41.7 33 39.7 33 H2.3 Q0.3 33 0.3 31 Z" fill="#7e4a9e"/><path d="M22.5 8.6 V24" stroke="#fff" stroke-width="2.4"/><path d="M21.3 8.2 Q24.5 8.4 29 10.5 V16 Q25.5 14.2 22 14 Z" fill="#fff"/><circle cx="18.6" cy="24" r="3.6" fill="#fff"/></svg>
<div class="t" style="left:306.2px;top:241.00px;font-size:12px;line-height:16px;color:#1a1a1a;letter-spacing:-0.15px;">Music</div>
<div class="t" style="left:306.2px;top:257.00px;font-size:12px;line-height:16px;color:#676767;letter-spacing:-0.15px;">Stored locally</div>
<svg style="left:309px;top:273.5px" width="12" height="12" viewBox="0 0 12 12"><g transform="translate(6 6) rotate(45)"><path d="M-1.9 -5.2 H1.9 L2.2 -1.3 L4.3 0.3 V1.4 H-4.3 V0.3 L-2.2 -1.3 Z" fill="#8c8c8c"/><path d="M0 1.4 V5.6" stroke="#8c8c8c" stroke-width="1"/></g></svg>
<svg style="left:533px;top:246px" width="42" height="33" viewBox="0 0 42 33"><defs><linearGradient id="fvi" x1="0" y1="0" x2="1" y2="1"><stop offset="0" stop-color="#b06ef0"/><stop offset="1" stop-color="#7a3ad9"/></linearGradient></defs>
<path d="M0.3 2.3 Q0.3 0.3 2.3 0.3 H12.2 Q13.4 0.3 14.3 1.2 L17 4 H39.7 Q41.7 4 41.7 6 V31 Q41.7 33 39.7 33 H2.3 Q0.3 33 0.3 31 Z" fill="#7a4bc1"/>
<path d="M0.3 9 Q0.3 7 2.3 7 H12.6 Q13.6 7 14.5 6.2 L15.3 5.5 Q16 4.9 17 4.9 H39.7 Q41.7 4.8 41.7 6.8 V31 Q41.7 33 39.7 33 H2.3 Q0.3 33 0.3 31 Z" fill="url(#fvi)"/><path d="M0.3 31.7 H41.7 V31 Q41.7 33 39.7 33 H2.3 Q0.3 33 0.3 31 Z" fill="#5a2aa8"/><rect x="3" y="10.2" width="5" height="5" fill="#3e2470"/><rect x="3" y="17.2" width="5" height="5" fill="#3e2470"/><rect x="3" y="24.2" width="5" height="5" fill="#3e2470"/><rect x="34" y="10.2" width="5" height="5" fill="#3e2470"/><rect x="34" y="17.2" width="5" height="5" fill="#3e2470"/><rect x="34" y="24.2" width="5" height="5" fill="#3e2470"/><path d="M16.3 11.6 L28.2 18.8 L16.3 26 Z" fill="#f4f4f4"/></svg>
<div class="t" style="left:590.2px;top:241.00px;font-size:12px;line-height:16px;color:#1a1a1a;letter-spacing:-0.15px;">Videos</div>
<div class="t" style="left:590.2px;top:257.00px;font-size:12px;line-height:16px;color:#676767;letter-spacing:-0.15px;">Stored locally</div>
<svg style="left:593px;top:273.5px" width="12" height="12" viewBox="0 0 12 12"><g transform="translate(6 6) rotate(45)"><path d="M-1.9 -5.2 H1.9 L2.2 -1.3 L4.3 0.3 V1.4 H-4.3 V0.3 L-2.2 -1.3 Z" fill="#8c8c8c"/><path d="M0 1.4 V5.6" stroke="#8c8c8c" stroke-width="1"/></g></svg>
<svg style="left:817px;top:246px" width="42" height="33" viewBox="0 0 42 33"><defs><linearGradient id="fss" x1="0" y1="0" x2="1" y2="1"><stop offset="0" stop-color="#ffe08f"/><stop offset="1" stop-color="#f9c63c"/></linearGradient></defs>
<path d="M0.3 2.3 Q0.3 0.3 2.3 0.3 H12.2 Q13.4 0.3 14.3 1.2 L17 4 H39.7 Q41.7 4 41.7 6 V31 Q41.7 33 39.7 33 H2.3 Q0.3 33 0.3 31 Z" fill="#f1b51c"/>
<path d="M0.3 9 Q0.3 7 2.3 7 H12.6 Q13.6 7 14.5 6.2 L15.3 5.5 Q16 4.9 17 4.9 H39.7 Q41.7 4.8 41.7 6.8 V31 Q41.7 33 39.7 33 H2.3 Q0.3 33 0.3 31 Z" fill="url(#fss)"/><path d="M0.3 31.7 H41.7 V31 Q41.7 33 39.7 33 H2.3 Q0.3 33 0.3 31 Z" fill="#e3a514"/></svg>
<div class="t" style="left:874.2px;top:241.00px;font-size:12px;line-height:16px;color:#1a1a1a;letter-spacing:-0.4px;">Screenshots</div>
<div class="t" style="left:874.2px;top:257.00px;font-size:12px;line-height:16px;color:#676767;letter-spacing:-0.32px;">Pictures</div>
<svg style="left:189.5px;top:312px" width="13" height="8" viewBox="0 0 13 8"><path d="M0.6 0.8 L6.3 6.5 L12 0.8" stroke="#262626" stroke-width="1.1" fill="none"/></svg>
<div class="t" style="left:218.5px;top:308.00px;font-size:12px;line-height:16px;color:#1a1a1a;letter-spacing:-0.35px;-webkit-text-stroke:0.5px currentColor;">Favorites</div>
<div class="t" style="left:218.5px;top:334.00px;font-size:12px;line-height:16px;color:#8c8c8c;letter-spacing:-0.05px;-webkit-text-stroke:0.15px currentColor">After you’ve favorited some files, we’ll show them here.</div>
<svg style="left:192.5px;top:374px" width="8" height="12" viewBox="0 0 8 12"><path d="M0.8 0.6 L6.6 5.8 L0.8 11" stroke="#262626" stroke-width="1.1" fill="none"/></svg>
<div class="t" style="left:218.5px;top:373.00px;font-size:12px;line-height:16px;color:#1a1a1a;letter-spacing:-0.35px;-webkit-text-stroke:0.5px currentColor;">Recent</div>
</body></html>
